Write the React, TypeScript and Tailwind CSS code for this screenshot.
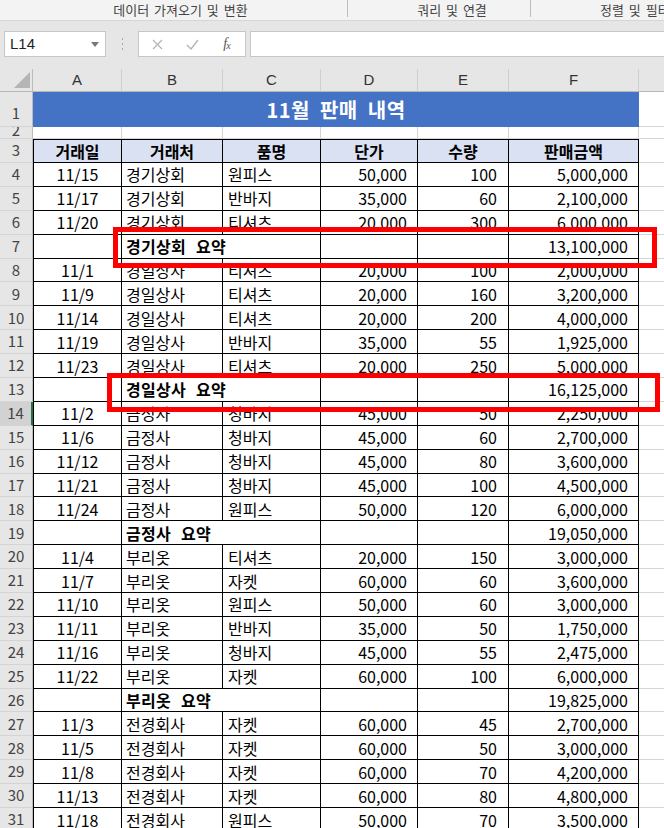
import React from 'react';

type Row = {
  n: number;
  d?: string;
  b: string;
  c?: string;
  p?: string;
  q?: string;
  t: string;
  sum?: boolean;
};

const rows: Row[] = [
  { n: 4, d: '11/15', b: '경기상회', c: '원피스', p: '50,000', q: '100', t: '5,000,000' },
  { n: 5, d: '11/17', b: '경기상회', c: '반바지', p: '35,000', q: '60', t: '2,100,000' },
  { n: 6, d: '11/20', b: '경기상회', c: '티셔츠', p: '20,000', q: '300', t: '6,000,000' },
  { n: 7, b: '경기상회 요약', t: '13,100,000', sum: true },
  { n: 8, d: '11/1', b: '경일상사', c: '티셔츠', p: '20,000', q: '100', t: '2,000,000' },
  { n: 9, d: '11/9', b: '경일상사', c: '티셔츠', p: '20,000', q: '160', t: '3,200,000' },
  { n: 10, d: '11/14', b: '경일상사', c: '티셔츠', p: '20,000', q: '200', t: '4,000,000' },
  { n: 11, d: '11/19', b: '경일상사', c: '반바지', p: '35,000', q: '55', t: '1,925,000' },
  { n: 12, d: '11/23', b: '경일상사', c: '티셔츠', p: '20,000', q: '250', t: '5,000,000' },
  { n: 13, b: '경일상사 요약', t: '16,125,000', sum: true },
  { n: 14, d: '11/2', b: '금정사', c: '청바지', p: '45,000', q: '50', t: '2,250,000' },
  { n: 15, d: '11/6', b: '금정사', c: '청바지', p: '45,000', q: '60', t: '2,700,000' },
  { n: 16, d: '11/12', b: '금정사', c: '청바지', p: '45,000', q: '80', t: '3,600,000' },
  { n: 17, d: '11/21', b: '금정사', c: '청바지', p: '45,000', q: '100', t: '4,500,000' },
  { n: 18, d: '11/24', b: '금정사', c: '원피스', p: '50,000', q: '120', t: '6,000,000' },
  { n: 19, b: '금정사 요약', t: '19,050,000', sum: true },
  { n: 20, d: '11/4', b: '부리옷', c: '티셔츠', p: '20,000', q: '150', t: '3,000,000' },
  { n: 21, d: '11/7', b: '부리옷', c: '자켓', p: '60,000', q: '60', t: '3,600,000' },
  { n: 22, d: '11/10', b: '부리옷', c: '원피스', p: '50,000', q: '60', t: '3,000,000' },
  { n: 23, d: '11/11', b: '부리옷', c: '반바지', p: '35,000', q: '50', t: '1,750,000' },
  { n: 24, d: '11/16', b: '부리옷', c: '청바지', p: '45,000', q: '55', t: '2,475,000' },
  { n: 25, d: '11/22', b: '부리옷', c: '자켓', p: '60,000', q: '100', t: '6,000,000' },
  { n: 26, b: '부리옷 요약', t: '19,825,000', sum: true },
  { n: 27, d: '11/3', b: '전경회사', c: '자켓', p: '60,000', q: '45', t: '2,700,000' },
  { n: 28, d: '11/5', b: '전경회사', c: '자켓', p: '60,000', q: '50', t: '3,000,000' },
  { n: 29, d: '11/8', b: '전경회사', c: '자켓', p: '60,000', q: '70', t: '4,200,000' },
  { n: 30, d: '11/13', b: '전경회사', c: '자켓', p: '60,000', q: '80', t: '4,800,000' },
  { n: 31, d: '11/18', b: '전경회사', c: '원피스', p: '50,000', q: '70', t: '3,500,000' },
];

function RowHead({ n, sel, className = '' }: { n: number | string; sel?: boolean; className?: string }) {
  return (
    <div
      className={
        'w-[33px] shrink-0 flex items-center justify-center border-b border-[#d4d4d4] text-[15px] text-[#444] overflow-hidden ' +
        (sel ? 'bg-[#d2d2d2] border-r-2 border-r-[#217346] ' : 'bg-[#e6e6e6] border-r border-r-[#bcbcbc] ') +
        className
      }
    >
      {n}
    </div>
  );
}

const cell = 'shrink-0 flex items-center border-r border-b border-black whitespace-nowrap';

function DataRow({ r }: { r: Row }) {
  return (
    <div className="flex h-[23.9px] shrink-0">
      <RowHead n={r.n} sel={r.n === 14} />
      <div className={cell + ' w-[89px] border-l justify-center'}>{r.d}</div>
      {r.sum ? (
        <div className={cell + ' w-[199px] pl-[4px] font-bold [word-spacing:6px] tracking-[0.3px]'}>{r.b}</div>
      ) : (
        <>
          <div className={cell + ' w-[101px] pl-[4px]'}>{r.b}</div>
          <div className={cell + ' w-[98px] pl-[5px]'}>{r.c}</div>
        </>
      )}
      <div className={cell + ' w-[97px] justify-end pr-[10px]'}>{r.p}</div>
      <div className={cell + ' w-[91px] justify-end pr-[11px]'}>{r.q}</div>
      <div className={cell + ' w-[130px] justify-end pr-[10px]'}>{r.t}</div>
      <div className="flex-1 border-b border-[#d4d4d4]" />
    </div>
  );
}

export default function App() {
  const letters = [
    ['A', 'w-[89px]'],
    ['B', 'w-[101px]'],
    ['C', 'w-[98px]'],
    ['D', 'w-[97px]'],
    ['E', 'w-[91px]'],
    ['F', 'w-[130px]'],
  ];
  const heads = [
    ['거래일', 'w-[89px] border-l'],
    ['거래처', 'w-[101px]'],
    ['품명', 'w-[98px]'],
    ['단가', 'w-[97px]'],
    ['수량', 'w-[91px]'],
    ['판매금액', 'w-[130px]'],
  ];

  return (
    <div className="relative w-[664px] h-[828px] overflow-hidden bg-white text-[16px] text-black font-['Noto_Sans_CJK_KR','Liberation_Sans',sans-serif] flex flex-col">
      {/* 리본 그룹 이름 */}
      <div className="h-[21px] shrink-0 bg-[#f3f3f3] border-b border-[#d6d6d6] flex text-[13px] text-[#444] leading-[20px] whitespace-nowrap [word-spacing:2px]">
        <div className="w-[347px] shrink-0 pl-[14px] text-center">데이터 가져오기 및 변환</div>
        <div className="w-px h-[17px] bg-[#bdbdbd] shrink-0" />
        <div className="w-[182px] shrink-0 pl-[26px] text-center">쿼리 및 연결</div>
        <div className="w-px h-[17px] bg-[#bdbdbd] shrink-0" />
        <div className="pl-[69px]">정렬 및 필터</div>
      </div>

      {/* 수식 입력줄 */}
      <div className="h-[48px] shrink-0 bg-[#e6e6e6] flex items-start pt-[10px] pl-[4px]">
        <div className="w-[102px] h-[26px] shrink-0 bg-white border border-[#c6c6c6] flex items-center justify-between pl-[5px] pr-[6px]">
          <span className="text-[15px] text-[#222] font-['Liberation_Sans',sans-serif]">L14</span>
          <svg width="8" height="5" viewBox="0 0 8 5">
            <path d="M0 0h8L4 5z" fill="#777" />
          </svg>
        </div>
        <div className="w-[32px] h-[26px] shrink-0 flex items-center justify-center">
          <svg width="3" height="13" viewBox="0 0 3 13">
            <rect x="1" y="0" width="1" height="2" fill="#a8a8a8" />
            <rect x="1" y="5" width="1" height="2" fill="#a8a8a8" />
            <rect x="1" y="10" width="1" height="2" fill="#a8a8a8" />
          </svg>
        </div>
        <div className="w-[108px] h-[26px] shrink-0 bg-white border border-[#c6c6c6] flex items-center">
          <div className="w-[34px] flex justify-center pl-[2px]">
            <svg width="11" height="11" viewBox="0 0 11 11">
              <path d="M1 1l9 9M10 1l-9 9" stroke="#b4b4b4" strokeWidth="1.2" />
            </svg>
          </div>
          <div className="w-[38px] flex justify-center">
            <svg width="13" height="11" viewBox="0 0 13 11">
              <path d="M1 6l4 4 7-9" stroke="#b4b4b4" strokeWidth="1.4" fill="none" />
            </svg>
          </div>
          <div className="w-[32px] flex justify-center font-['Liberation_Serif',serif] italic text-[#555] text-[14px] leading-none">
            f<span className="text-[10px] -ml-[1px] mt-[4px]">x</span>
          </div>
        </div>
        <div className="ml-[4px] flex-1 -mr-[4px] h-[26px] bg-white border border-[#c6c6c6]" />
      </div>

      {/* 열 머리글 */}
      <div className="flex h-[23px] shrink-0 bg-[#e6e6e6] border-b border-[#b8b8b8] text-[15px] text-[#333] font-['Liberation_Sans',sans-serif]">
        <div className="w-[33px] shrink-0 relative border-r border-[#bcbcbc]">
          <svg className="absolute right-[2px] bottom-[3px]" width="16" height="16" viewBox="0 0 16 16">
            <path d="M16 0V16H0z" fill="#b5b5b5" />
          </svg>
        </div>
        {letters.map(([l, w]) => (
          <div key={l} className={w + ' shrink-0 flex items-center justify-center border-r border-[#cfcfcf]'}>
            {l}
          </div>
        ))}
        <div className="flex-1" />
      </div>

      {/* 1행: 제목 */}
      <div className="flex h-[35px] shrink-0">
        <RowHead n={1} className="pt-[8px]" />
        <div className="w-[606px] shrink-0 bg-[#4472c4] text-white font-bold text-[20px] flex items-center justify-center [word-spacing:5px] tracking-[0.5px]">
          11월 판매 내역
        </div>
        <div className="flex-1 border-b border-[#d4d4d4]" />
      </div>

      {/* 2행 */}
      <div className="flex h-[12px] shrink-0">
        <RowHead n={2} className="items-start leading-[5px]" />
        {letters.map(([l, w]) => (
          <div key={l} className={w + ' shrink-0 border-r border-b border-[#d4d4d4]'} />
        ))}
        <div className="flex-1 border-b border-[#d4d4d4]" />
      </div>

      {/* 3행: 머리글 */}
      <div className="flex h-[24px] shrink-0">
        <RowHead n={3} />
        {heads.map(([h, w]) => (
          <div key={h} className={w + ' shrink-0 flex items-center justify-center border-t border-r border-b border-black bg-[#d9e1f2] font-bold'}>
            {h}
          </div>
        ))}
        <div className="flex-1 border-b border-[#d4d4d4]" />
      </div>

      {rows.map((r) => (
        <DataRow key={r.n} r={r} />
      ))}

      {/* 빨간 강조 상자 */}
      <div className="absolute left-[113px] top-[227px] w-[544px] h-[41px] border-[5px] border-[#ff0000]" />
      <div className="absolute left-[107px] top-[373px] w-[553px] h-[39px] border-[5px] border-[#ff0000]" />
    </div>
  );
}
